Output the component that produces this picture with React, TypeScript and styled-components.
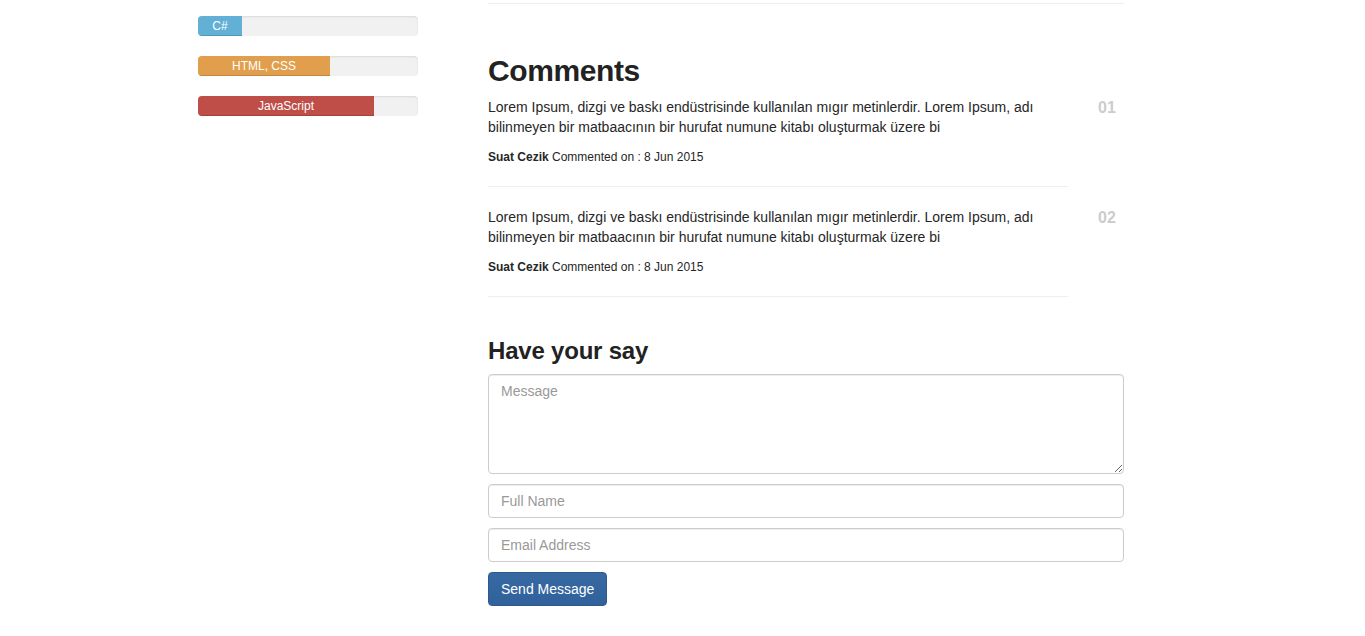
import React from "react";
import styled, { createGlobalStyle } from "styled-components";

const GlobalStyle = createGlobalStyle`
  html, body {
    margin: 0;
    padding: 0;
    background: #ffffff;
  }
  body {
    font-family: "Liberation Sans", Arial, Helvetica, sans-serif;
    font-size: 14px;
    line-height: 20px;
    color: #262626;
  }
  * { box-sizing: border-box; }
`;

const Page = styled.div`
  display: flex;
  align-items: flex-start;
  gap: 70px;
  padding-left: 198px;
  padding-bottom: 30px;
`;

const Sidebar = styled.aside`
  width: 220px;
  padding-top: 16px;
  display: flex;
  flex-direction: column;
  gap: 20px;
`;

const Track = styled.div`
  height: 20px;
  border-radius: 4px;
  background: #f1f1f1;
  box-shadow: inset 0 1px 2px rgba(0, 0, 0, 0.1);
  overflow: hidden;
  display: flex;
`;

const Fill = styled.div<{ $color: string }>`
  height: 100%;
  background: ${(p) => p.$color};
  color: #ffffff;
  font-size: 12px;
  line-height: 20px;
  text-align: center;
  box-shadow: inset 0 -1px 0 rgba(0, 0, 0, 0.15);
`;

const Main = styled.main`
  width: 636px;
`;

const TopRule = styled.hr`
  margin: 3px 0 0;
  border: 0;
  border-top: 1px solid #eeeeee;
`;

const SectionTitle = styled.h2`
  margin: 50px 0 10px;
  font-size: 30px;
  line-height: 33px;
  font-weight: 700;
  letter-spacing: -0.4px;
  color: #222222;
`;

const CommentRow = styled.div`
  display: grid;
  grid-template-columns: 580px 1fr;
  column-gap: 30px;
`;

const CommentBody = styled.div``;

const CommentText = styled.p`
  margin: 0 0 10px;
  font-size: 14px;
  line-height: 20px;
`;

const Meta = styled.div`
  font-size: 12px;
  line-height: 20px;
`;

const Author = styled.strong`
  font-weight: 700;
`;

const Rule = styled.hr`
  margin: 19px 0 20px;
  border: 0;
  border-top: 1px solid #eeeeee;
`;

const Number = styled.div`
  font-size: 16px;
  font-weight: 700;
  line-height: 20px;
  padding-top: 1px;
  color: #cccccc;
`;

const FormTitle = styled.h3`
  margin: 21px 0 10px;
  font-size: 24px;
  line-height: 26px;
  font-weight: 700;
  letter-spacing: -0.2px;
  color: #222222;
`;

const Form = styled.form`
  display: flex;
  flex-direction: column;
  gap: 10px;
  align-items: flex-start;
`;

const fieldStyles = `
  width: 100%;
  border: 1px solid #cccccc;
  border-radius: 4px;
  padding: 6px 12px;
  font-family: "Liberation Sans", Arial, Helvetica, sans-serif;
  font-size: 14px;
  line-height: 20px;
  color: #555555;
  background: #ffffff;
  box-shadow: inset 0 1px 1px rgba(0, 0, 0, 0.075);
  outline: none;
  &::placeholder { color: #999999; }
`;

const TextArea = styled.textarea`
  ${fieldStyles}
  height: 100px;
  display: block;
  margin: 0;
`;

const Input = styled.input`
  ${fieldStyles}
  height: 34px;
  display: block;
  margin: 0;
`;

const Button = styled.button`
  height: 34px;
  padding: 6px 12px;
  border: 1px solid #2c5a8f;
  border-radius: 4px;
  background: linear-gradient(#3769a3, #30619b);
  color: #ffffff;
  font-family: "Liberation Sans", Arial, Helvetica, sans-serif;
  font-size: 14px;
  line-height: 20px;
  cursor: pointer;
`;

const skills = [
  { label: "C#", pct: 20, color: "#62b0d5" },
  { label: "HTML, CSS", pct: 60, color: "#e19f4d" },
  { label: "JavaScript", pct: 80, color: "#c04e48" },
];

const comments = [{ n: "01" }, { n: "02" }];

const LOREM =
  "Lorem Ipsum, dizgi ve baskı endüstrisinde kullanılan mıgır metinlerdir. Lorem Ipsum, adı bilinmeyen bir matbaacının bir hurufat numune kitabı oluşturmak üzere bi";

export default function App() {
  return (
    <>
      <GlobalStyle />
      <Page>
        <Sidebar>
          {skills.map((s) => (
            <Track key={s.label}>
              <Fill $color={s.color} style={{ width: `${s.pct}%` }}>
                {s.label}
              </Fill>
            </Track>
          ))}
        </Sidebar>
        <Main>
          <TopRule />
          <SectionTitle>Comments</SectionTitle>
          {comments.map((c) => (
            <CommentRow key={c.n}>
              <CommentBody>
                <CommentText>{LOREM}</CommentText>
                <Meta>
                  <Author>Suat Cezik</Author> Commented on : 8 Jun 2015
                </Meta>
                <Rule />
              </CommentBody>
              <Number>{c.n}</Number>
            </CommentRow>
          ))}
          <FormTitle>Have your say</FormTitle>
          <Form onSubmit={(e) => e.preventDefault()}>
            <TextArea placeholder="Message" />
            <Input type="text" placeholder="Full Name" />
            <Input type="email" placeholder="Email Address" />
            <Button type="submit">Send Message</Button>
          </Form>
        </Main>
      </Page>
    </>
  );
}
